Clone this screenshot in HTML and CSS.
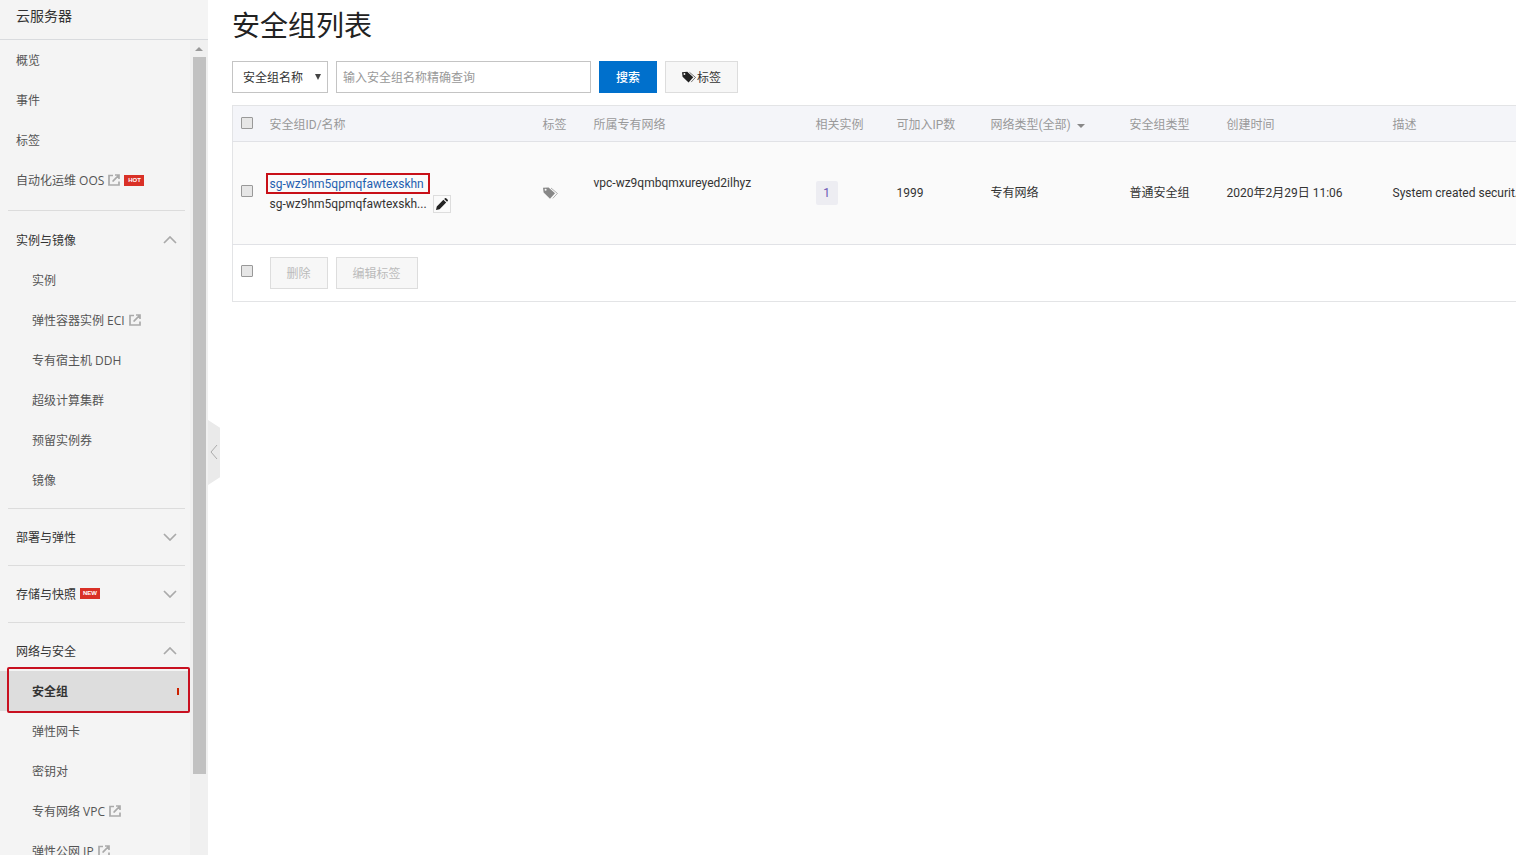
FILE: index.html
```html
<!DOCTYPE html>
<html lang="zh-CN">
<head>
<meta charset="utf-8">
<title>安全组列表</title>
<link rel="stylesheet" href="styles.css">
</head>
<body>
<svg class="symbols" aria-hidden="true">
  <symbol id="ext" viewBox="0 0 12 12"><path d="M5 1.5H1v9.5h10V7.5M7 1h4v4M11 1 5.2 6.8v1" fill="none" stroke="currentColor" stroke-width="1.7"/></symbol>
  <symbol id="up" viewBox="0 0 14 8"><path d="M1 7l6-6 6 6" fill="none" stroke="currentColor" stroke-width="1.7"/></symbol>
  <symbol id="down" viewBox="0 0 14 8"><path d="M1 1l6 6 6-6" fill="none" stroke="currentColor" stroke-width="1.7"/></symbol>
  <symbol id="tags" viewBox="0 0 16 12"><path fill-rule="evenodd" d="M0 .8 5.6.4 12 6.2 7 11.8.6 5.6zM2.6 1.8a1 1 0 1 0 0 2 1 1 0 0 0 0-2z" fill="currentColor"/><path d="M8 1l6.4 5.4-4.6 5" fill="none" stroke="currentColor" stroke-width="1" opacity=".65"/></symbol>
</svg>
<div class="app">
  <aside class="sidebar">
    <h2 class="product">云服务器</h2>
    <div class="sidebar-body">
      <nav class="nav">
        <a class="item" href="#">概览</a>
        <a class="item" href="#">事件</a>
        <a class="item" href="#">标签</a>
        <a class="item" href="#">自动化运维 OOS <svg class="ext"><use href="#ext"/></svg><span class="badge">HOT</span></a>
        <hr class="line line-first">
        <button class="item group" type="button">实例与镜像<svg class="chevron"><use href="#up"/></svg></button>
        <a class="item sub" href="#">实例</a>
        <a class="item sub" href="#">弹性容器实例 ECI <svg class="ext"><use href="#ext"/></svg></a>
        <a class="item sub" href="#">专有宿主机 DDH</a>
        <a class="item sub" href="#">超级计算集群</a>
        <a class="item sub" href="#">预留实例券</a>
        <a class="item sub" href="#">镜像</a>
        <hr class="line">
        <button class="item group" type="button">部署与弹性<svg class="chevron"><use href="#down"/></svg></button>
        <hr class="line">
        <button class="item group" type="button">存储与快照<span class="badge">NEW</span><svg class="chevron"><use href="#down"/></svg></button>
        <hr class="line">
        <button class="item group" type="button">网络与安全<svg class="chevron"><use href="#up"/></svg></button>
        <a class="item sub active" href="#">安全组<span class="mark"></span></a>
        <a class="item sub" href="#">弹性网卡</a>
        <a class="item sub" href="#">密钥对</a>
        <a class="item sub" href="#">专有网络 VPC <svg class="ext"><use href="#ext"/></svg></a>
        <a class="item sub" href="#">弹性公网 IP <svg class="ext"><use href="#ext"/></svg></a>
      </nav>
      <div class="scrollbar"><span class="scroll-up"></span><span class="thumb"></span></div>
    </div>
    <button class="collapse" type="button" aria-label="收起"><svg viewBox="0 0 8 16"><path d="M7 1 1 8l6 7" fill="none" stroke="currentColor"/></svg></button>
  </aside>
  <main class="main">
    <h1 class="title">安全组列表</h1>
    <form class="search">
      <div class="picker">
        <select class="select" aria-label="查询条件"><option>安全组名称</option></select>
        <span class="arrow" aria-hidden="true"></span>
      </div>
      <input class="query" type="text" aria-label="查询" placeholder="输入安全组名称精确查询">
      <button class="btn primary" type="button">搜索</button>
      <button class="btn" type="button"><svg class="tags"><use href="#tags"/></svg>标签</button>
    </form>
    <table class="table">
      <colgroup><col class="c-check"><col class="c-id"><col class="c-tag"><col class="c-vpc"><col class="c-count"><col class="c-ip"><col class="c-net"><col class="c-type"><col class="c-time"><col class="c-desc"></colgroup>
      <thead>
        <tr><th><input type="checkbox" class="check" aria-label="全选"></th><th>安全组ID/名称</th><th>标签</th><th>所属专有网络</th><th>相关实例</th><th>可加入IP数</th><th>网络类型(全部)<span class="caret"></span></th><th>安全组类型</th><th>创建时间</th><th>描述</th></tr>
      </thead>
      <tbody>
        <tr>
          <td><input type="checkbox" class="check" aria-label="选择安全组"></td>
          <td class="ident"><div><a class="link" href="#">sg-wz9hm5qpmqfawtexskhn</a></div><div class="name">sg-wz9hm5qpmqfawtexskh...<button class="edit" type="button" aria-label="编辑"><svg viewBox="0 0 12 12"><path d="M0 12l.8-3.6L7.4 1.8l2.8 2.8-6.6 6.6zM8.2 1 9 .3q.6-.5 1.2 0l1.5 1.5q.5.6 0 1.2l-.7.8z" fill="currentColor"/></svg></button></div></td>
          <td><svg class="tags muted"><use href="#tags"/></svg></td>
          <td class="vpc">vpc-wz9qmbqmxureyed2ilhyz</td>
          <td><a class="count" href="#">1</a></td>
          <td>1999</td><td>专有网络</td><td>普通安全组</td><td>2020年2月29日 11:06</td><td>System created securit...</td>
        </tr>
      </tbody>
      <tfoot>
        <tr><td><input type="checkbox" class="check" aria-label="全选"></td><td colspan="9"><div class="actions"><button class="btn" type="button" disabled>删除</button><button class="btn" type="button" disabled>编辑标签</button></div></td></tr>
      </tfoot>
    </table>
  </main>
</div>
</body>
</html>
```
FILE: styles.css
```css
* { box-sizing: border-box; }
body, button, input, select {
  font-family: "Open Sans", "Noto Sans CJK SC", sans-serif;
  font-size: 12px;
  font-weight: 400;
}
body { margin: 0; color: #333; background: #fff; line-height: 20px; overflow: hidden; }
a { text-decoration: none; }
button { cursor: pointer; }
.symbols { position: absolute; width: 0; height: 0; }
.app { display: flex; height: 100vh; }

.sidebar {
  position: relative;
  flex: 0 0 208px;
  display: flex;
  flex-direction: column;
  background: #f4f4f4;
}
.product {
  flex: none;
  height: 40px;
  margin: 0;
  padding: 6px 16px;
  border-bottom: 1px solid #d9dbde;
  font-size: 14px;
  font-weight: 400;
}
.sidebar-body { flex: 1; display: flex; min-height: 0; }
.nav { flex: 1; overflow: hidden; }
.item {
  position: relative;
  display: flex;
  align-items: center;
  width: 100%;
  height: 40px;
  padding: 2px 13px 0 16px;
  border: 0;
  background: none;
  color: #555;
  white-space: pre;
}
.group { padding-top: 0; color: #333; text-align: left; }
.sub { padding-left: 32px; }
.line { height: 1px; margin: 8px 5px 8px 8px; border: 0; background: #dcdcdc; }
.line-first { margin-top: 10px; margin-bottom: 9px; }
.ext { width: 12px; height: 12px; margin: 0 0 2px 1px; color: #aaa; }
.badge {
  width: 20px;
  height: 11px;
  margin: 0 0 2px 4px;
  background: #d93026;
  color: #fff;
  font: 700 6px/11px "Liberation Sans", sans-serif;
  text-align: center;
}
.chevron { width: 14px; height: 8px; margin-left: auto; color: #aaa; }
.active { background: #ddd; color: #333; font-weight: 700; }
.active::after {
  content: "";
  position: absolute;
  inset: -4px 0 -2px 7px;
  border: 2px solid #c81020;
  border-radius: 2px;
}
.mark { width: 2px; height: 7px; margin: 0 -2px 2px auto; background: #c20; }
.scrollbar { flex: 0 0 18px; display: flex; flex-direction: column; align-items: center; background: #f0f0f0; }
.scroll-up { margin: 7px 0 6px; border: 4px solid transparent; border-top: 0; border-bottom-color: #999; }
.thumb { width: 13px; height: 88%; background: #c1c1c1; }
.collapse {
  position: absolute;
  left: 100%;
  top: 420px;
  display: flex;
  align-items: center;
  width: 12px;
  height: 65px;
  padding: 0 2px 2px;
  border: 0;
  background: #eaeaea;
  color: #aaa;
  clip-path: polygon(0 0, 100% 12%, 100% 88%, 0 100%);
}
.collapse svg { width: 8px; height: 16px; }

.main { flex: 1; min-width: 0; overflow: hidden; padding-left: 24px; }
.title { margin: 5px 0 16px; font-size: 28px; line-height: 40px; font-weight: 400; color: #222; }
.search { display: flex; gap: 8px; margin-bottom: 12px; }
.picker { position: relative; width: 96px; }
.select {
  appearance: none;
  width: 100%;
  height: 32px;
  padding: 0 10px;
  border: 1px solid #c4c4c4;
  border-radius: 0;
  background: #fff;
  color: #333;
}
.arrow {
  position: absolute;
  right: 7px;
  top: 13px;
  border: 3px solid transparent;
  border-top: 6px solid #444;
  border-bottom: 0;
  pointer-events: none;
}
.query { width: 255px; height: 32px; padding: 0 6px; border: 1px solid #c4c4c4; }
.query::placeholder { color: #999; }
.btn {
  display: flex;
  align-items: center;
  height: 32px;
  padding: 0 16px;
  border: 1px solid #ddd;
  background: #f7f7f7;
  color: #333;
}
.btn .tags { width: 15px; }
.btn:disabled { color: #bbb; }
.primary { border-color: #0070cc; background: #0070cc; color: #fff; font-weight: 500; }
.tags { display: block; width: 16px; height: 12px; color: #222; }
.table .muted { color: #888; }

.table {
  width: 100%;
  min-width: 1353px;
  table-layout: fixed;
  border-collapse: collapse;
  border: 1px solid #e3e4e6;
  font-family: Roboto, "Noto Sans CJK SC", sans-serif;
}
.c-check { width: 29px; }
.c-id { width: 273px; }
.c-tag { width: 51px; }
.c-vpc { width: 222px; }
.c-count { width: 81px; }
.c-ip { width: 94px; }
.c-net { width: 139px; }
.c-type { width: 97px; }
.c-time { width: 166px; }
.table th, .table td { padding: 0 8px; text-align: left; font-weight: 400; white-space: nowrap; }
.table th { height: 36px; padding-top: 2px; background: #f4f5f9; color: #999; }
.table td { border-top: 1px solid #e1e2e6; }
.table tbody td { height: 103px; background: #fafafa; }
.table tfoot td { height: 57px; }
.table .ident { padding-top: 2px; }
.check {
  appearance: none;
  display: block;
  width: 12px;
  height: 12px;
  margin: 0 0 4px;
  border: 1px solid #999;
  border-radius: 1px;
  background: #e6e6e6;
}
.caret { display: inline-block; margin-left: 6px; vertical-align: 1px; border: 4px solid transparent; border-top-color: #888; border-bottom: 0; }
.link { position: relative; color: #1f5fb0; }
.link::after { content: ""; position: absolute; inset: -4px -6px -3px -4px; border: 2px solid #c81018; }
.name { display: flex; align-items: center; height: 20px; }
.edit { width: 18px; height: 18px; margin-left: 6px; padding: 2px; border: 1px solid #ddd; background: #fafafa; color: #222; }
.edit svg { display: block; width: 12px; height: 12px; }
.table .vpc { padding-bottom: 20px; }
.count { display: inline-block; width: 22px; height: 24px; border-radius: 2px; background: #ededf2; color: #6a55b5; line-height: 24px; text-align: center; }
.actions { display: flex; gap: 8px; }
```
